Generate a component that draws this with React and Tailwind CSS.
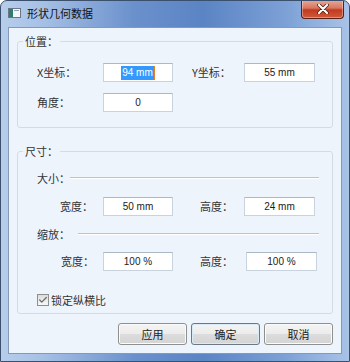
import { Check } from 'lucide-react'

function Field({ value, selected, className = '' }) {
  return (
    <div
      className={`h-[19px] flex items-center justify-center bg-white border border-[#c9d3dd] border-t-[#abb8c6] text-[10px] text-[#1b1b1b] ${className}`}
      style={{ fontFamily: '"Liberation Sans", Arial, sans-serif' }}
    >
      {selected ? (
        <span className="bg-[#3399ff] text-white px-[1px] leading-[14px] border-r border-r-[#e0802a]">{value}</span>
      ) : (
        value
      )}
    </div>
  )
}

function Group({ title, className = '', children }) {
  return (
    <div className={`relative mx-[8px] border border-[#d3dce5] rounded-[3px] ${className}`}>
      <span className="absolute -top-[8px] left-[5px] px-[2px] bg-[#eef4fc] leading-[14px] text-[#333]">
        {title}
      </span>
      {children}
    </div>
  )
}

function SubHeader({ title, gap }) {
  return (
    <div className="h-[14px] flex items-center pl-[19px] pr-[13px]">
      <span className="w-[33px] leading-[14px] text-[#333] whitespace-nowrap">{title}</span>
      <div className={`flex-1 h-[2px] border-t border-t-[#b9c3cd] border-b border-b-white ${gap}`} />
    </div>
  )
}

function Button({ label, primary }) {
  return (
    <button
      className={`w-[69px] h-[22px] rounded-[3px] border text-[#222] leading-none bg-[linear-gradient(#f4f4f4_0%,#ececec_48%,#dcdcdc_52%,#d4d4d4_100%)] ${
        primary ? 'border-[#6b7885] shadow-[inset_0_0_0_1px_#d8ebf7]' : 'border-[#8e8f8f] shadow-[inset_0_0_0_1px_#fbfbfb]'
      }`}
    >
      {label}
    </button>
  )
}

export default function App() {
  return (
    <div
      className="w-[350px] h-[362px] flex flex-col border border-[#3a506c] rounded-t-[7px] overflow-hidden text-[11px] bg-[linear-gradient(to_right,#b7cdeb_0%,#a6c0e5_12%,#6b91cc_38%,#5b84c4_58%,#7da1d6_82%,#a9c3e7_100%)]"
      style={{ fontFamily: '"Noto Sans CJK SC", "Noto Sans", sans-serif' }}
    >
      {/* Title bar */}
      <div className="h-[26px] flex items-start">
        <div className="flex items-center h-[24px] pl-[7px]">
          <svg width="13" height="10" viewBox="0 0 13 10" className="mr-[6px]">
            <rect x="0.5" y="0.5" width="12" height="9" fill="#f4f6f8" stroke="#6b7785" />
            <rect x="1" y="1" width="4" height="8" fill="#2f7d6b" />
            <rect x="6" y="2" width="5" height="1" fill="#8fa3b8" />
          </svg>
          <span className="text-[#111] leading-[14px]">形状几何数据</span>
        </div>
        <div className="ml-auto mr-[5px] -mt-[1px] w-[43px] h-[19px] rounded-b-[4px] border border-[#5a2018] border-t-0 flex items-center justify-center bg-[linear-gradient(#e9a99a_0%,#d8765f_45%,#c23a1e_55%,#cf5a3a_100%)] shadow-[inset_0_0_0_1px_rgba(255,255,255,0.35)]">
          <svg width="12" height="10" viewBox="0 0 12 10">
            <path d="M2 1 L10 9 M10 1 L2 9" stroke="#4a1a12" strokeWidth="3.6" strokeLinecap="round" />
            <path d="M2 1 L10 9 M10 1 L2 9" stroke="#ffffff" strokeWidth="2.2" strokeLinecap="round" />
          </svg>
        </div>
      </div>

      {/* Client area */}
      <div className="flex-1 px-[7px] pb-[7px] flex">
        <div className="flex-1 flex flex-col border border-[#8399b8] bg-[#eef4fc]">
          {/* 位置 */}
          <Group title="位置：" className="mt-[13px] h-[87px]">
            <div className="flex flex-col pt-[21px] gap-[11px]">
              <div className="flex items-center pl-[19px] h-[19px]">
                <span className="w-[66px] text-[#333]">X坐标：</span>
                <Field value="94 mm" selected className="w-[70px]" />
                <span className="ml-[19px] w-[52px] text-[#333]">Y坐标：</span>
                <Field value="55 mm" className="w-[71px]" />
              </div>
              <div className="flex items-center pl-[19px] h-[19px]">
                <span className="w-[66px] text-[#333]">角度：</span>
                <Field value="0" className="w-[70px]" />
              </div>
            </div>
          </Group>

          {/* 尺寸 */}
          <Group title="尺寸：" className="mt-[23px] h-[163px]">
            <div className="flex flex-col pt-[19px]">
              <SubHeader title="大小：" gap="ml-[0px]" />
              <div className="flex items-center h-[19px] mt-[12px] pl-[42px]">
                <span className="w-[43px] text-[#333]">宽度：</span>
                <Field value="50 mm" className="w-[70px]" />
                <span className="ml-[27px] w-[44px] text-[#333]">高度：</span>
                <Field value="24 mm" className="w-[71px]" />
              </div>
              <div className="mt-[11px]">
                <SubHeader title="缩放：" gap="ml-[8px]" />
              </div>
              <div className="flex items-center h-[19px] mt-[11px] pl-[43px]">
                <span className="w-[42px] text-[#333]">宽度：</span>
                <Field value="100 %" className="w-[70px]" />
                <span className="ml-[27px] w-[46px] text-[#333]">高度：</span>
                <Field value="100 %" className="w-[71px]" />
              </div>
              <label className="flex items-center h-[12px] mt-[23px] pl-[19px] text-[#333]">
                <span className="w-[12px] h-[12px] mr-[2px] border border-[#8f8f8f] bg-[linear-gradient(#dcdcdc,#f8f8f8)] flex items-center justify-center">
                  <Check size={10} strokeWidth={3} className="text-[#6a6a6a]" />
                </span>
                锁定纵横比
              </label>
            </div>
          </Group>

          {/* Buttons */}
          <div className="flex justify-end gap-[4px] mt-[9px] mr-[8px]">
            <Button label="应用" />
            <Button label="确定" primary />
            <Button label="取消" />
          </div>
        </div>
      </div>
    </div>
  )
}
